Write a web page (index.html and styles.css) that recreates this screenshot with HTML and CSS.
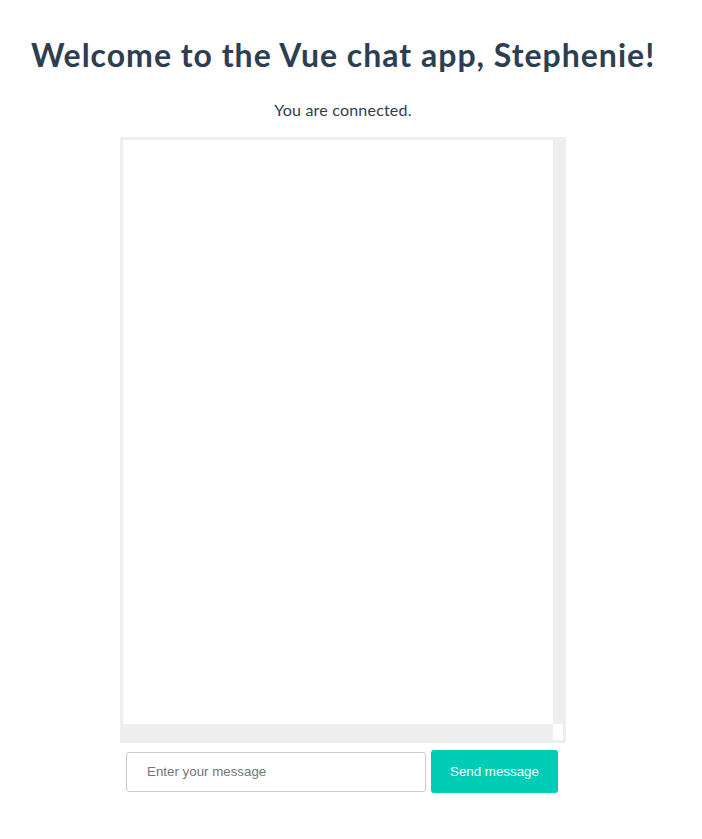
FILE: index.html
```html
<!DOCTYPE html>
<html lang="en">
<head>
    <meta charset="UTF-8">
    <meta name="viewport" content="width=device-width, initial-scale=1.0">
    <title>Vue chat app</title>
    <link rel="stylesheet" href="styles.css">
</head>
<body>
    <div id="app" class="app">
        <h1 class="title">Welcome to the Vue chat app, Stephenie!</h1>
        <p class="status">You are connected.</p>

        <!-- Message list with its scrollbars -->
        <div class="chat">
            <div class="messages"></div>
            <div class="scroll-v"></div>
            <div class="scroll-h"></div>
            <div class="scroll-corner"></div>
        </div>

        <form class="composer">
            <input class="message-input" type="text" placeholder="Enter your message">
            <button class="send-btn" type="submit">Send message</button>
        </form>
    </div>
</body>
</html>
```

FILE: styles.css
```css
body {
    margin: 8px;
    width: 670px; /* leaves room for the page scrollbar */
    background: #fff;
}

.app {
    font-family: Lato, 'Noto Sans', sans-serif;
    color: #2c3e50;
    text-align: center;
}

.title {
    font-size: 32px;
    font-weight: 700;
    letter-spacing: 1px;
    margin: 21px 0 0;
    line-height: 52px;
}

.status {
    font-size: 16px;
    letter-spacing: 0.2px;
    margin: 18px 0 16px;
    line-height: 22px;
}

.chat {
    width: 440px;
    height: 600px;
    margin: 0 auto;
    border: 3px solid #eee;
    display: grid;
    grid-template-columns: 1fr 10px;
    grid-template-rows: 1fr 16px;
    background: #fff;
}

.scroll-v,
.scroll-h {
    background: #eee;
}

.scroll-corner {
    background: #fff;
}

.composer {
    display: flex;
    justify-content: center;
    align-items: center;
    gap: 5px;
    margin-top: 7px;
    padding-right: 2px;
}

.message-input {
    width: 300px;
    height: 40px;
    box-sizing: border-box;
    padding: 0 20px;
    border: 1px solid #ccc;
    border-radius: 3px;
    font-family: 'Liberation Sans', Arial, sans-serif;
    font-size: 13.33px;
    color: #333;
}

.message-input::placeholder {
    color: #757575;
}

.send-btn {
    width: 127px;
    height: 43px;
    border: none;
    border-radius: 3px;
    background-color: #00cdb6;
    color: #fff;
    font-family: 'Liberation Sans', Arial, sans-serif;
    font-size: 13.33px;
    cursor: pointer;
}
```
